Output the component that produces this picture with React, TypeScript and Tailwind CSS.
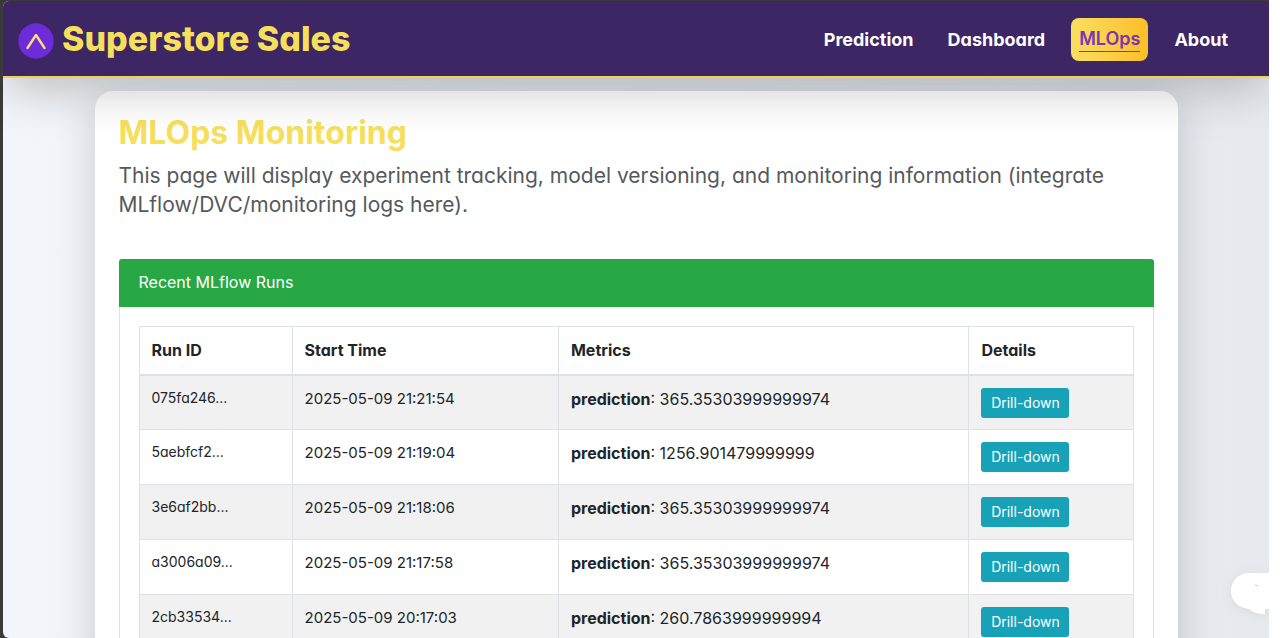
const navItems = [
  { label: 'Prediction', active: false },
  { label: 'Dashboard', active: false },
  { label: 'MLOps', active: true },
  { label: 'About', active: false },
];

const runs = [
  { id: '075fa246...', start: '2025-05-09 21:21:54', prediction: '365.35303999999974' },
  { id: '5aebfcf2...', start: '2025-05-09 21:19:04', prediction: '1256.901479999999' },
  { id: '3e6af2bb...', start: '2025-05-09 21:18:06', prediction: '365.35303999999974' },
  { id: 'a3006a09...', start: '2025-05-09 21:17:58', prediction: '365.35303999999974' },
  { id: '2cb33534...', start: '2025-05-09 20:17:03', prediction: '260.7863999999994' },
];

function Logo() {
  return (
    <svg viewBox="0 0 36 36" className="mt-1 size-9 shrink-0" aria-hidden="true">
      <circle cx="18" cy="18" r="17.7" fill="#6d2bd9" />
      <path
        d="M9.5 25 L18 12 L26.5 25"
        fill="none"
        stroke="#f9dc7c"
        strokeWidth="2.4"
        strokeLinecap="round"
        strokeLinejoin="round"
      />
    </svg>
  );
}

function Navbar() {
  return (
    <header className="relative z-10 flex h-[77px] shrink-0 items-center justify-between border-b-2 border-[#f0cf55] bg-[#3c2663] px-[15px] shadow-[0_16px_48px_-4px_rgba(0,0,0,0.22)]">
      <a href="#home" className="flex items-center gap-2 text-[34px] leading-10 font-extrabold text-[#f7df5e]">
        <Logo />
        Superstore Sales
      </a>
      <nav className="flex items-center gap-[18px] pt-0.5 pr-[18px]">
        {navItems.map((item) => (
          <a
            key={item.label}
            href={`#${item.label.toLowerCase()}`}
            className={
              item.active
                ? 'rounded-lg bg-linear-to-r from-[#f8df5f] to-[#fcbe26] px-2 py-[9px] text-lg leading-6 font-semibold text-[#7b35b0]'
                : 'px-2 py-[9px] text-lg leading-6 font-bold text-white'
            }
          >
            <span className={item.active ? 'block border-b border-[#7b35b0]' : 'block'}>{item.label}</span>
          </a>
        ))}
      </nav>
    </header>
  );
}

function RunsTable() {
  return (
    <table className="w-full table-fixed border-collapse border border-[#dee2e6] text-base leading-6 text-[#212529]">
      <colgroup>
        <col className="w-[15.4%]" />
        <col className="w-[26.8%]" />
        <col className="w-[41.3%]" />
        <col className="w-[16.5%]" />
      </colgroup>
      <thead>
        <tr className="h-12 border-b-2 border-[#dee2e6] text-left">
          {['Run ID', 'Start Time', 'Metrics', 'Details'].map((name) => (
            <th key={name} scope="col" className="border-x border-[#dee2e6] px-3 font-bold">
              {name}
            </th>
          ))}
        </tr>
      </thead>
      <tbody>
        {runs.map((run) => (
          <tr key={run.id} className="h-[55px] border-b border-[#dee2e6] align-top odd:bg-[#f1f1f1]">
            <td className="border-x border-[#dee2e6] px-3 py-[10px] text-sm leading-6">{run.id}</td>
            <td className="border-x border-[#dee2e6] px-3 py-[11px] text-[15px] leading-6">{run.start}</td>
            <td className="border-x border-[#dee2e6] px-3 py-[11px]">
              <strong className="font-bold">prediction</strong>: {run.prediction}
            </td>
            <td className="border-x border-[#dee2e6] px-3 pt-3">
              <button type="button" className="block h-[30px] w-[88px] rounded-[3px] bg-[#17a2b8] text-sm text-white">
                Drill-down
              </button>
            </td>
          </tr>
        ))}
      </tbody>
    </table>
  );
}

function ChatButton() {
  return (
    <button
      type="button"
      aria-label="Open chat"
      className="absolute right-0 bottom-[23px] z-20 h-[42px] w-[38px] drop-shadow-[0_2px_6px_rgba(0,0,0,0.06)]"
    >
      <svg viewBox="0 0 38 42" className="size-full" aria-hidden="true">
        <path d="M38 0H18C8 0 0 8 0 18s8 17 18 18c4 3 9 5 16 5v-5h4Z" fill="#fff" />
        <path d="M24 12l3 1" stroke="#c9ccd0" strokeWidth="1.2" />
      </svg>
    </button>
  );
}

export default function App() {
  return (
    <div className="flex h-screen bg-[#3a3a3a] font-['Inter','Noto_Sans',sans-serif] [font-feature-settings:'cv11']">
      <div className="flex min-w-0 flex-1 pt-px pl-[3px]">
        <div className="relative flex min-w-0 flex-1 flex-col overflow-hidden rounded-l-md bg-linear-to-r from-[#f2f5f9] to-[#e6eaef]">
          <Navbar />
          <div className="min-h-0 flex-1 overflow-y-auto [scrollbar-width:none]">
            <main className="mx-auto mt-[13px] max-w-[1083px] rounded-[18px] bg-white p-6 shadow-[0_8px_40px_rgba(31,38,50,0.2)]">
              <h1 className="text-[32px] leading-9 font-bold text-[#f7df5e]">MLOps Monitoring</h1>
              <p className="mt-[10px] text-[21px] leading-[29px] text-[#55595c]">
                This page will display experiment tracking, model versioning, and monitoring information (integrate
                MLflow/DVC/monitoring logs here).
              </p>
              <section className="mt-10 rounded-[4px] border border-[#dfdfdf]">
                <h2 className="-mx-px -mt-px flex h-12 items-center rounded-t-[3px] bg-[#28a745] px-5 pb-0.5 text-base text-white">
                  Recent MLflow Runs
                </h2>
                <div className="p-[19px]">
                  <RunsTable />
                </div>
              </section>
            </main>
          </div>
          <ChatButton />
        </div>
      </div>
      <div className="w-[11px] shrink-0 bg-white" />
    </div>
  );
}
